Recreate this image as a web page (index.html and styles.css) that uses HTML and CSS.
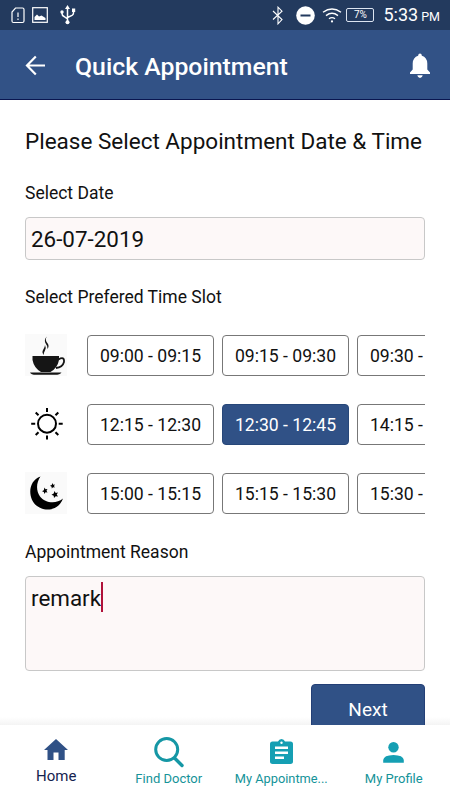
FILE: index.html
```html
<!DOCTYPE html>
<html lang="en">
  <head>
    <meta charset="UTF-8">
    <meta name="viewport" content="width=device-width, initial-scale=1.0">
    <title>Quick Appointment</title>
    <link rel="stylesheet" href="styles.css">
  </head>
  <body>
    <div class="app">
      <div class="status-bar">
        <div class="status-left">
          <svg class="sim-icon" width="14" height="17" viewBox="0 0 14 17" fill="none" stroke="#fff" stroke-width="1.2">
            <path d="M4.5 1H11.5Q13 1 13 2.500V14Q13 15.500 11.500 15.500H2.500Q1 15.500 1 14V5Z"/>
            <path d="M7 5.500V10M7 11.500V13"/>
          </svg>
          <svg class="image-icon" width="16" height="16" viewBox="0 0 16 16">
            <rect x="0.700" y="0.700" width="14.600" height="14.600" fill="none" stroke="#fff" stroke-width="1.200"/>
            <path d="M2.500 13V10L5 7.500L7 9.500L9.500 8.500L13.500 11V13Z" fill="#fff"/>
          </svg>
          <svg class="usb-icon" width="16" height="20" viewBox="0 0 16 20" fill="none" stroke="#fff" stroke-width="1.500">
            <path d="M7.500 3V17M2 7V8.500Q2 10.500 4 11.500L7.500 14M13.500 5.500V8Q13.500 9.500 12 10.300L7.500 12.500"/>
            <path d="M7.500 0L10 4H5Z" fill="#fff" stroke="none"/>
            <circle cx="2" cy="7" r="1.700" fill="#fff" stroke="none"/>
            <rect x="12" y="3.500" width="3.200" height="3.500" fill="#fff" stroke="none"/>
            <circle cx="7.500" cy="17.200" r="2" fill="#fff" stroke="none"/>
          </svg>
        </div>
        <div class="status-right">
          <svg class="bluetooth-icon" width="12" height="19" viewBox="0 0 12 19" fill="none" stroke="#fff" stroke-width="1.100">
            <path d="M1 5L10 13.500L6 17.800V1.200L10 5.200L1 13.500"/>
          </svg>
          <svg class="dnd-icon" width="19" height="19" viewBox="0 0 19 19">
            <circle cx="9.500" cy="9.500" r="9.300" fill="#fff"/>
            <rect x="4.500" y="8.500" width="10" height="2" fill="#233a5e"/>
          </svg>
          <svg class="wifi-icon" width="20" height="15" viewBox="0 0 20 15" fill="none" stroke="#fff" stroke-width="1.400">
            <path d="M1 4.200Q10 -2.200 19 4.200M4 7.600Q10 3 16 7.600M7 10.800Q10 8.500 13 10.800"/>
            <circle cx="10" cy="13.400" r="1.100" fill="#fff" stroke="none"/>
          </svg>
          <span class="battery">7%</span>
          <div class="clock">5:33<small>PM</small></div>
        </div>
      </div>

      <div class="header">
        <svg class="back-icon" width="22" height="22" viewBox="0 0 22 22" fill="none" stroke="#fff" stroke-width="2.200">
          <path d="M20 10.500H2.500M10.800 1.500L2 10.500L10.800 19.500"/>
        </svg>
        <span class="header-title">Quick Appointment</span>
        <svg class="bell-icon" width="22" height="26" viewBox="0 0 22 26" fill="#fff">
          <path d="M11 0.500Q12.700 0.500 12.900 2.800Q18 4.200 18.300 10.500V16.500L21 19.500V21H1V19.500L3.700 16.500V10.500Q4 4.200 9.100 2.800Q9.300 0.500 11 0.500Z"/>
          <path d="M8.300 22.300H13.700Q13.200 25 11 25Q8.800 25 8.300 22.300Z"/>
        </svg>
      </div>

      <div class="content">
        <h1 class="page-title">Please Select Appointment Date &amp; Time</h1>

        <div class="label">Select Date</div>
        <div class="field date-field">26-07-2019</div>

        <div class="label">Select Prefered Time Slot</div>
        <div class="slots">
          <div class="slot-row">
            <div class="slot-icon tinted">
              <svg width="42" height="42" viewBox="0 0 42 42">
                <path d="M6.500 22H33V26Q31.500 34 24.500 38H15Q8 34 6.500 26Z" fill="#151515"/>
                <path d="M32.500 25.500Q38.500 22 38 28Q36.500 33.500 30 34" fill="none" stroke="#151515" stroke-width="1.800"/>
                <path d="M4 38.500H35.500Q34 40.800 29 40.800H10Q5 40.800 4 38.500Z" fill="#151515"/>
                <path d="M20.800 2.500Q18.500 6 21.700 9.500Q23.500 12 21.500 15Q21.800 12 19.800 9.800Q17.500 6 20.800 2.500ZM19 11Q20.500 14 19 16.500Q17.500 18.500 18 21Q15.300 18.500 17.300 15.500Q18.800 13.500 19 11Z" fill="#151515"/>
              </svg>
            </div>
            <div class="slot-list">
              <div class="slot">09:00 - 09:15</div>
              <div class="slot">09:15 - 09:30</div>
              <div class="slot">09:30 - 09:45</div>
            </div>
          </div>
          <div class="slot-row">
            <div class="slot-icon">
              <svg width="42" height="42" viewBox="0 0 42 42" fill="none" stroke="#000" stroke-width="2">
                <circle cx="21" cy="20.700" r="9"/>
                <path d="M21 5V9M21 32.500V36.500M5.200 20.700H9.200M32.700 20.700H36.700M9.700 9.500L12.500 12.300M29.500 29.200L32.300 32M32.300 9.500L29.500 12.300M12.500 29.200L9.700 32"/>
              </svg>
            </div>
            <div class="slot-list">
              <div class="slot">12:15 - 12:30</div>
              <div class="slot selected">12:30 - 12:45</div>
              <div class="slot">14:15 - 14:30</div>
            </div>
          </div>
          <div class="slot-row">
            <div class="slot-icon tinted">
              <svg width="42" height="42" viewBox="0 0 42 42" fill="#000">
                <path d="M14.500 4.500C1.500 9 1.500 27 11 34C20 40.500 33 38 37 26.500C30 32.500 19 31 14 24.500C10 18.500 10 11 14.500 4.500Z"/>
                <path d="M18.500 15.500L19.500 17.300L21.500 17L20.500 18.800L21.500 20.500L19.500 20.300L18.300 22L17.900 20L16 19.200L17.800 18.200Z"/>
                <path d="M26.500 11L27.200 12.700L29 12.500L28 14L28.800 15.500L27 15.200L25.800 16.500L25.600 14.700L24 13.800L25.700 13Z"/>
                <path d="M28.500 19L29.700 21L32 20.500L30.700 22.600L32 24.500L29.700 24.300L28 26L27.700 23.700L25.500 22.700L27.700 21.600Z"/>
              </svg>
            </div>
            <div class="slot-list">
              <div class="slot">15:00 - 15:15</div>
              <div class="slot">15:15 - 15:30</div>
              <div class="slot">15:30 - 15:45</div>
            </div>
          </div>
        </div>

        <div class="label">Appointment Reason</div>
        <div class="field reason-field">remark<span class="caret"></span></div>

        <button class="next-button">Next</button>
      </div>

      <div class="bottom-nav">
        <div class="nav-item active">
          <svg width="24" height="21" viewBox="0 0 24 21" fill="#305186">
            <path d="M12 0L24 11H20.700V21H14.500V13.500H9.500V21H3.500V11H0Z"/>
          </svg>
          <span>Home</span>
        </div>
        <div class="nav-item find">
          <svg width="30" height="31" viewBox="0 0 30 31" fill="none" stroke="#1597a5" stroke-width="3">
            <circle cx="12.700" cy="12.500" r="11"/>
            <path d="M20.500 21L28 28.500" stroke-width="3.400" stroke-linecap="round"/>
          </svg>
          <span>Find Doctor</span>
        </div>
        <div class="nav-item appointments">
          <svg width="23" height="25" viewBox="0 0 23 25">
            <path d="M2.500 2.500H8Q9 0 11.500 0Q14 0 15 2.500H20.500Q23 2.500 23 5V22.500Q23 25 20.500 25H2.500Q0 25 0 22.500V5Q0 2.500 2.500 2.500Z" fill="#159fb3"/>
            <circle cx="11.500" cy="3.700" r="1.200" fill="#fff"/>
            <path d="M5 8.700H18M5 13.700H18M5 18.700H14" stroke="#fff" stroke-width="2.400"/>
          </svg>
          <span>My Appointme...</span>
        </div>
        <div class="nav-item profile">
          <svg width="21" height="21" viewBox="0 0 21 21" fill="#159fb3">
            <circle cx="10.500" cy="5.200" r="5.200"/>
            <path d="M0.200 20.700V18Q0.800 13.200 10.500 13Q20.200 13.200 20.800 18V20.700Z"/>
          </svg>
          <span>My Profile</span>
        </div>
      </div>
    </div>
  </body>
</html>
```
FILE: styles.css
```css
* {
    margin: 0;
    padding: 0;
    box-sizing: border-box;
}

body {
    font-family: Roboto, 'Liberation Sans', sans-serif;
    background: #fff;
    color: #111;
}

.app {
    width: 450px;
    height: 800px;
    display: flex;
    flex-direction: column;
    overflow: hidden;
}

svg {
    display: block;
    flex-shrink: 0;
}

.status-bar {
    height: 30px;
    flex-shrink: 0;
    background: #233a5e;
    color: #fff;
    display: flex;
    align-items: center;
    justify-content: space-between;
    padding: 0 10px 0 11px;
}

.status-left,
.status-right {
    display: flex;
    align-items: center;
}

.image-icon {
    margin-left: 7px;
}

.usb-icon {
    margin-left: 12px;
}

.dnd-icon {
    margin-left: 12px;
}

.wifi-icon {
    margin-left: 7px;
}

.battery {
    width: 28px;
    height: 14px;
    margin-left: 4px;
    border: 1px solid #dce4f0;
    border-radius: 2px;
    font-size: 10px;
    line-height: 12px;
    text-align: center;
}

.clock {
    display: flex;
    align-items: baseline;
    gap: 3px;
    margin-left: 9px;
    font-size: 18px;
    line-height: 30px;
    padding-top: 2px;
    white-space: nowrap;
}

.clock small {
    font-size: 12.5px;
}

.header {
    height: 70px;
    flex-shrink: 0;
    background: #325286;
    border-bottom: 1px solid #0a1650;
    color: #fff;
    display: flex;
    align-items: center;
    padding: 2px 19px 0 25px;
}

.header-title {
    flex: 1;
    margin-left: 28px;
    padding-top: 2px;
    font-size: 24.8px;
    font-weight: 500;
    line-height: 32px;
}

.content {
    flex: 1;
    min-height: 0;
    overflow: hidden;
    padding: 25px 25px 0;
    display: flex;
    flex-direction: column;
    background: linear-gradient(to top, #f4f4f4, #fff 8px);
}

.page-title {
    font-size: 22.5px;
    font-weight: 400;
    line-height: 32px;
    margin-bottom: 24px;
    white-space: nowrap;
}

.label {
    font-size: 17.5px;
    line-height: 24px;
    margin-bottom: 12px;
}

.field {
    flex-shrink: 0;
    background: #fdf8f8;
    border: 1px solid #c8c8c8;
    border-radius: 4px;
    padding: 0 5px;
    font-size: 22.4px;
}

.date-field {
    height: 43px;
    line-height: 43px;
    margin-bottom: 25px;
}

.slots {
    display: flex;
    flex-direction: column;
    gap: 27px;
    margin: 13px 0 26px;
}

.slot-row {
    height: 42px;
    display: flex;
    align-items: center;
}

.slot-icon {
    width: 42px;
    height: 42px;
    flex-shrink: 0;
    margin-right: 20px;
    padding-left: 1px;
}

.slot-icon.tinted {
    background: #fafafa;
}

.slot-list {
    flex: 1;
    display: flex;
    gap: 8px;
    overflow: hidden;
}

.slot {
    width: 127px;
    height: 41px;
    flex-shrink: 0;
    border: 1px solid #777;
    border-radius: 4px;
    font-size: 17.6px;
    line-height: 40px;
    text-align: center;
    white-space: nowrap;
}

.slot.selected {
    background: #305186;
    border-color: #274779;
    color: #fff;
}

.reason-field {
    height: 95px;
    padding-top: 5px;
    display: flex;
    line-height: 33px;
}

.caret {
    width: 2px;
    height: 30px;
    background: #b0123a;
}

.next-button {
    width: 114px;
    height: 51px;
    flex-shrink: 0;
    align-self: flex-end;
    margin-top: 13px;
    background: #305186;
    border: 1px solid #233f76;
    border-radius: 4px;
    color: #fff;
    font-family: inherit;
    font-size: 19px;
}

.bottom-nav {
    height: 75px;
    flex-shrink: 0;
    background: #fff;
    display: grid;
    grid-template-columns: repeat(4, 1fr);
}

.nav-item {
    display: flex;
    flex-direction: column;
    align-items: center;
    padding-top: 14px;
    color: #159399;
    font-size: 13px;
    line-height: 16px;
    white-space: nowrap;
}

.nav-item span {
    margin-top: auto;
    margin-bottom: 13px;
}

.nav-item.active {
    color: #14224f;
    font-size: 15px;
}

.nav-item.active span {
    margin-bottom: 16px;
}

.nav-item.find {
    padding-top: 12px;
}

.nav-item.appointments {
    font-size: 12.8px;
}

.nav-item.profile {
    padding-top: 17px;
}
```
